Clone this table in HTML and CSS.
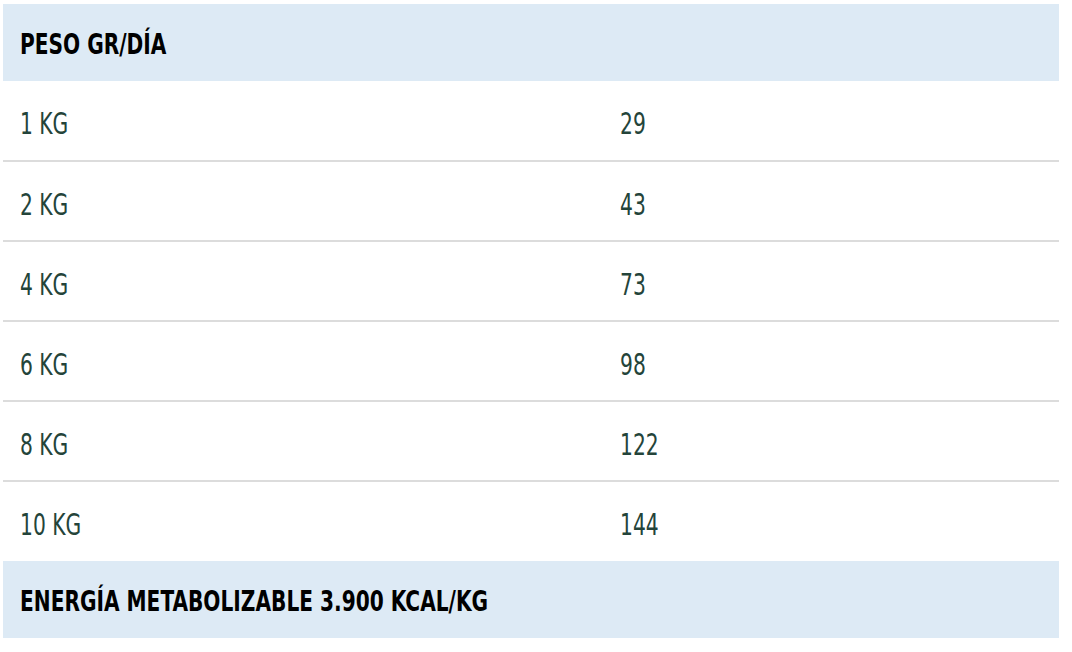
FILE: index.html
```html
<!DOCTYPE html>
<html lang="es">
<head>
<meta charset="utf-8">
<link rel="stylesheet" href="styles.css">
</head>
<body>
<table class="feed">
  <thead>
    <tr class="band"><th colspan="2"><span class="tx">PESO GR/DÍA</span></th></tr>
  </thead>
  <tbody>
    <tr><td class="c1"><span class="tx">1 KG</span></td><td><span class="tx">29</span></td></tr>
    <tr><td class="c1"><span class="tx">2 KG</span></td><td><span class="tx">43</span></td></tr>
    <tr><td class="c1"><span class="tx">4 KG</span></td><td><span class="tx">73</span></td></tr>
    <tr><td class="c1"><span class="tx">6 KG</span></td><td><span class="tx">98</span></td></tr>
    <tr><td class="c1"><span class="tx">8 KG</span></td><td><span class="tx">122</span></td></tr>
    <tr class="last"><td class="c1"><span class="tx">10 KG</span></td><td><span class="tx">144</span></td></tr>
  </tbody>
  <tfoot>
    <tr class="band"><th colspan="2"><span class="tx">ENERGÍA METABOLIZABLE 3.900 KCAL/KG</span></th></tr>
  </tfoot>
</table>
</body>
</html>
```
FILE: styles.css
```css
html, body { margin: 0; background: #fff; }
body { padding: 4px 13px 0 3px; }
.feed {
  width: 1056px;
  border-collapse: collapse;
  font-family: "DejaVu Sans Condensed", "DejaVu Sans", sans-serif;
  font-stretch: condensed;
}
.tx {
  display: inline-block;
  line-height: 1;
  transform-origin: 0 50%;
  white-space: nowrap;
}
.feed th {
  background: #ddeaf5;
  color: #000;
  font-weight: bold;
  font-size: 28px;
  text-align: left;
  height: 77px;
  padding: 3px 17px 0;
  box-sizing: border-box;
}
.feed th .tx { transform: scaleX(0.8); }
.feed td {
  color: #24443a;
  font-size: 30px;
  height: 80px;
  padding: 6px 17px 0;
  border-bottom: 2px solid #dcdcdc;
  box-sizing: border-box;
}
.feed td .tx { transform: scaleX(0.75); }
.feed td.c1 { width: 600px; }
.feed tr.last td { border-bottom: none; }
```
